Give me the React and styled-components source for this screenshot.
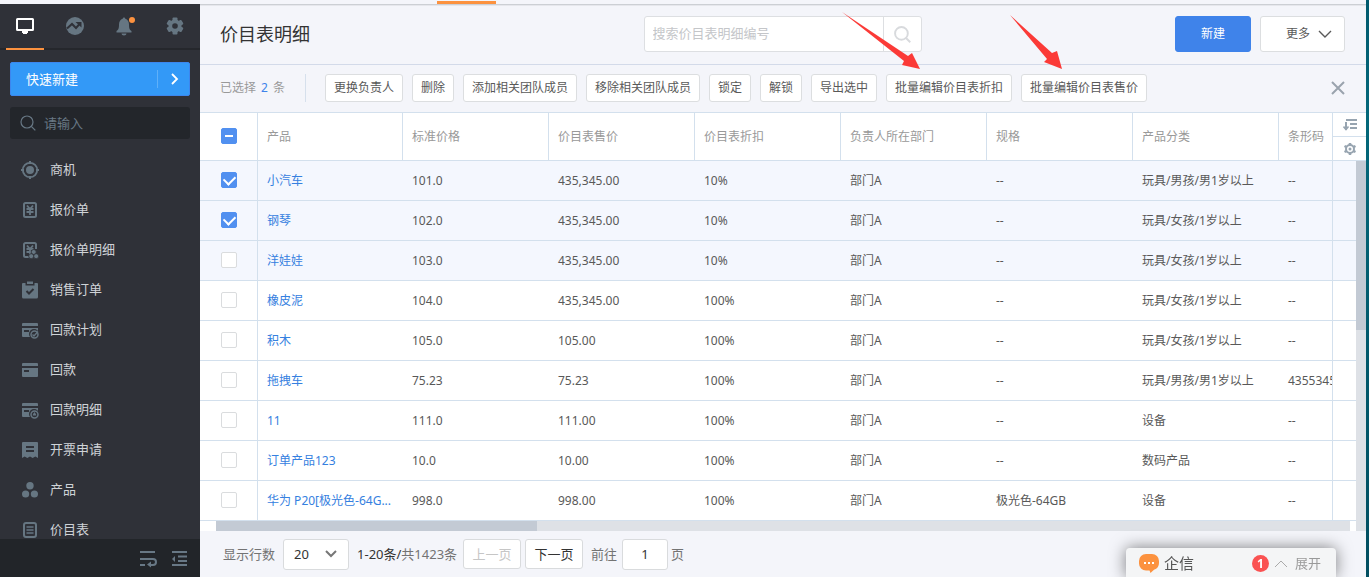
import React, { useEffect, useRef, useState } from "react";
import styled, { createGlobalStyle } from "styled-components";

const GlobalStyle = createGlobalStyle`
  * {
    box-sizing: border-box;
  }

  body {
    margin: 0;
    background: #f4f5fa;
    color: #595959;
    font-family: "Noto Sans", "Noto Sans CJK SC", sans-serif;
    font-size: 12px;
    line-height: 18px;
  }

  button, input, select {
    font: inherit;
    color: inherit;
    margin: 0;
  }

  button {
    cursor: pointer;
  }

  svg {
    display: block;
    flex: none;
  }
`;

const Page = styled.div`
  display: flex;
  height: 100vh;
  overflow: hidden;
`;

const DesktopEdge = styled.div`
  width: 3px;
  background: linear-gradient(#015a6e, #04687a 20%, #02596b 60%, #024f61);
`;

const Screen = styled.div`
  flex: 1;
  min-width: 0;
  display: flex;
  flex-direction: column;
`;

const TopStrip = styled.div`
  height: 4px;
  padding: 1px 0 0 437px;
`;

const TopIndicator = styled.div`
  width: 59px;
  height: 3px;
  background: #fc923f;
`;

const Layout = styled.div`
  flex: 1;
  min-height: 0;
  display: flex;
`;

/* ---- sidebar ---- */

const Sidebar = styled.aside`
  width: 200px;
  flex: none;
  display: flex;
  flex-direction: column;
  background: #2f3138;
  color: #687885;
`;

const SideTabs = styled.div`
  display: grid;
  grid-template-columns: repeat(4, 1fr);
  height: 46px;
  border-bottom: 2px solid #25272c;
`;

const SideTab = styled.button`
  position: relative;
  display: flex;
  align-items: center;
  justify-content: center;
  padding: 0;
  border: 0;
  background: none;
  color: ${(props) => (props.$active ? "#fff" : "#667682")};

  &::after {
    content: "";
    display: ${(props) => (props.$active ? "block" : "none")};
    position: absolute;
    left: 6px;
    right: 6px;
    bottom: -2px;
    height: 2px;
    background: #fc923f;
  }
`;

const QuickCreate = styled.button`
  display: flex;
  align-items: center;
  height: 34px;
  margin: 12px 10px 11px;
  padding: 0 10px 0 15px;
  border: 1px solid #3c86ee;
  border-radius: 2px;
  background: #3399f7;
  color: #fff;
  font-size: 13px;

  span {
    flex: 1;
    text-align: left;
  }

  svg {
    margin-left: 11px;
  }
`;

const QuickDivider = styled.i`
  width: 1px;
  height: 18px;
  background: #5fb0f9;
`;

const SideSearch = styled.label`
  display: flex;
  align-items: center;
  gap: 8px;
  height: 32px;
  margin: 0 10px;
  padding: 0 10px;
  border-radius: 3px;
  background: #23262b;

  input {
    flex: 1;
    min-width: 0;
    padding: 0;
    border: 0;
    outline: 0;
    background: none;
    font-size: 13px;
    color: #c6cbd0;
  }

  input::placeholder {
    color: #687885;
    opacity: 1;
  }
`;

const SideNav = styled.nav`
  flex: 1;
  min-height: 0;
  overflow: hidden;
  padding-top: 11px;
`;

const SideLink = styled.a`
  display: flex;
  align-items: center;
  gap: 10px;
  height: 40px;
  padding-left: 20px;
  color: #cfd3d7;
  font-size: 13px;
  text-decoration: none;

  svg {
    color: #667682;
  }

  span {
    padding-bottom: 2px;
  }
`;

const SideFooter = styled.div`
  display: flex;
  align-items: center;
  justify-content: flex-end;
  gap: 12px;
  height: 38px;
  padding: 2px 10px 0;
  background: #222529;
`;

const IconButton = styled.button`
  display: flex;
  align-items: center;
  justify-content: center;
  padding: 0;
  border: 0;
  background: none;
  color: inherit;
`;

/* ---- main ---- */

const Main = styled.main`
  flex: 1;
  min-width: 0;
  display: flex;
  flex-direction: column;
  box-shadow: inset 0 1px 0 #cccfd4, inset 0 2px 0 #e6e7ec;
`;

const Header = styled.header`
  display: grid;
  grid-template-columns: 1fr 278px 1fr;
  align-items: center;
  height: 61px;
  padding: 0 21px 0 20px;
  border-bottom: 1px solid #d3dae9;
`;

const Title = styled.h1`
  margin: 0;
  color: #333;
  font-size: 18px;
  font-weight: 400;
  line-height: 24px;
`;

const SearchBox = styled.form`
  display: flex;
  height: 36px;
  border: 1px solid #dddfe2;
  border-radius: 3px;
  background: #fff;

  input {
    flex: 1;
    min-width: 0;
    padding: 0 8px 2px;
    border: 0;
    outline: 0;
    background: none;
    font-size: 13px;
  }

  input::placeholder {
    color: #c4c6c9;
    opacity: 1;
  }

  button {
    width: 38px;
    border-left: 1px solid #dddfe2;
    color: #d8dadd;
  }
`;

const HeaderActions = styled.div`
  display: flex;
  justify-content: flex-end;
  gap: 9px;
`;

const Button = styled.button`
  display: flex;
  align-items: center;
  justify-content: center;
  gap: 8px;
  height: 36px;
  padding: 0 25px;
  border: 1px solid ${(props) => (props.$primary ? "#3f83ea" : "#dcdee0")};
  border-radius: 3px;
  background: ${(props) => (props.$primary ? "#3f83ea" : "#fff")};
  color: ${(props) => (props.$primary ? "#fff" : "#595959")};
`;

const MoreButton = styled(Button)`
  padding: 0 12px 0 25px;
`;

const BatchBar = styled.div`
  display: flex;
  align-items: center;
  gap: 9px;
  height: 47px;
  padding: 0 20px 2px;
  color: #999;
`;

const SelectedCount = styled.div`
  display: flex;
  align-items: center;
  gap: 5px;
  height: 28px;
  margin-right: 10px;
  padding-right: 20px;
  border-right: 1px solid #d6e0ec;
  white-space: nowrap;

  b {
    color: #3f83ea;
    font-weight: 400;
  }
`;

const BatchButton = styled.button`
  height: 28px;
  padding: 0 8px;
  border: 1px solid #dcdee0;
  border-radius: 3px;
  background: #fff;
  color: #595959;
  white-space: nowrap;
`;

const CloseButton = styled(IconButton)`
  margin-left: auto;
  color: #9aa3ad;
`;

/* ---- table ---- */

const line = "#d3e0ed";

const TableArea = styled.section`
  display: flex;
  border-top: 1px solid ${line};
  background: #fff;
`;

const TableClip = styled.div`
  flex: 1;
  min-width: 0;
  overflow: hidden;
`;

const Table = styled.table`
  width: 1225px;
  table-layout: fixed;
  border-collapse: separate;
  border-spacing: 0;
`;

const HeadCell = styled.th`
  height: 48px;
  padding: 0 9px;
  border-right: 1px solid ${line};
  border-bottom: 1px solid ${line};
  color: #999;
  font-weight: 400;
  text-align: left;
  white-space: nowrap;
`;

const Row = styled.tr`
  background: ${(props) => (props.$tinted ? "#f4f7fe" : "#fff")};
`;

const Cell = styled.td`
  height: 40px;
  padding: 0 9px;
  border-bottom: 1px solid ${line};
  overflow: hidden;
  white-space: nowrap;

  a {
    color: #3580e0;
    text-decoration: none;
  }
`;

const CheckCell = styled(Cell)`
  padding: 0 20px 1px 21px;
  border-right: 1px solid ${line};
`;

const CheckHead = styled(HeadCell)`
  padding: 0 20px 1px 21px;
`;

const Checkbox = styled.input`
  appearance: none;
  display: flex;
  align-items: center;
  justify-content: center;
  width: 16px;
  height: 16px;
  margin: 0;
  border: 1px solid #dadcde;
  border-radius: 2px;
  background: #fff;

  &:checked,
  &:indeterminate {
    border-color: #5190f0;
    background: #5190f0;
  }

  &:checked::after {
    content: "";
    width: 9px;
    height: 6px;
    margin-bottom: 2px;
    border-left: 2px solid #fff;
    border-bottom: 2px solid #fff;
    transform: rotate(-45deg);
  }

  &:indeterminate::after {
    content: "";
    width: 8px;
    height: 2px;
    background: #fff;
  }
`;

const Rail = styled.div`
  width: 34px;
  flex: none;
  display: flex;
  flex-direction: column;
  border-left: 1px solid ${line};
`;

const RailHead = styled.div`
  display: grid;
  grid-template-rows: 24px 24px;
  color: #97a4b0;

  button {
    border-bottom: 1px solid ${line};
  }
`;

const RailBody = styled.div`
  flex: 1;
  display: flex;
`;

const RailRows = styled.div`
  flex: 1;
`;

const RailRow = styled.div`
  height: 40px;
  border-bottom: 1px solid ${line};
  background: ${(props) => (props.$tinted ? "#f4f7fe" : "#fff")};
`;

const VScroll = styled.div`
  width: 10px;
  background: #dee1e6;
`;

const VThumb = styled.div`
  width: 10px;
  height: 47%;
  background: #c3cad4;
`;

const HScrollRow = styled.div`
  display: flex;
  height: 10px;
  padding-left: 16px;
  background: #fff;
`;

const HScroll = styled.div`
  flex: 1;
  margin-right: 6px;
  background: #dee1e6;
`;

const HThumb = styled.div`
  width: 321px;
  height: 10px;
  background: #c3cad4;
`;

/* ---- pager ---- */

const Pager = styled.footer`
  display: flex;
  align-items: center;
  height: 46px;
  padding-left: 23px;
  color: #737373;
  font-size: 13px;
`;

const PageSize = styled.span`
  position: relative;
  margin: 0 8px;

  select {
    appearance: none;
    display: block;
    width: 66px;
    height: 31px;
    padding: 0 10px;
    border: 1px solid #d9dbdd;
    border-radius: 3px;
    background: #fff;
    color: #333;
  }

  svg {
    position: absolute;
    right: 12px;
    top: 10px;
    pointer-events: none;
  }
`;

const Total = styled.span`
  width: 98px;
  margin-right: 8px;
  white-space: nowrap;

  b {
    color: #333;
    font-weight: 400;
  }
`;

const PageButton = styled.button`
  width: 58px;
  height: 30px;
  margin-right: 4px;
  padding: 0;
  border: 1px solid #d9dbdd;
  border-radius: 3px;
  background: #fff;
  color: #333;

  &:disabled {
    color: #c6c6c6;
  }
`;

const PageInput = styled.input`
  width: 46px;
  height: 31px;
  margin: 0 3px 0 5px;
  padding: 0;
  border: 1px solid #d9dbdd;
  border-radius: 3px;
  background: #fff;
  color: #333;
  text-align: center;
`;

const PageLabel = styled.label`
  margin-left: ${(props) => (props.$gap ? "4px" : "0")};
`;

/* ---- floating chat + arrows ---- */

const ChatBar = styled.button`
  position: fixed;
  right: 33px;
  bottom: 0;
  display: flex;
  align-items: center;
  width: 210px;
  height: 29px;
  padding: 1px 15px 0 13px;
  border: 0;
  border-radius: 4px 4px 0 0;
  background: #f4f5f6;
  box-shadow: 0 0 16px rgba(0, 0, 0, 0.5);
  color: #999;
  font-size: 13px;

  strong {
    flex: 1;
    margin-left: 5px;
    color: #555;
    font-size: 15px;
    font-weight: 400;
    text-align: left;
  }
`;

const Badge = styled.em`
  width: 17px;
  height: 17px;
  margin-right: 5px;
  border-radius: 50%;
  background: #fa5252;
  color: #fff;
  font-size: 12px;
  font-style: normal;
  font-weight: 700;
  line-height: 17px;
  text-align: center;
`;

const ChatToggle = styled.span`
  margin-left: 7px;
`;

const Arrows = styled.svg`
  position: absolute;
  left: 842px;
  top: 12px;
  pointer-events: none;
`;

const MonitorIcon = () => (
  <svg width="18" height="18" viewBox="0 0 18 18">
    <path
      fill="currentColor"
      fillRule="evenodd"
      d="M1.500 1h15A1.500 1.500 0 0 1 18 2.500v10a1.500 1.500 0 0 1-1.500 1.500H12v2h-1v1H7v-1H6v-2H1.500A1.500 1.500 0 0 1 0 12.500v-10A1.500 1.500 0 0 1 1.500 1zM2 3v9h14V3z"
    />
  </svg>
);

const TrendIcon = () => (
  <svg width="18" height="18" viewBox="0 0 18 18">
    <circle cx="9" cy="9" r="9" fill="currentColor" />
    <path d="M1 11.500l5-4.500 4 4 4-4.500" fill="none" stroke="#2f3138" strokeWidth="2" />
    <path d="M9.500 5h6v5.500z" fill="#2f3138" />
  </svg>
);

const BellIcon = () => (
  <svg width="20" height="20" viewBox="0 0 20 20">
    <path fill="currentColor" d="M9 1.500a1.300 1.300 0 0 1 1.300 1.300C12.800 3.500 14 6 14 8.500c0 4 .6 5.200 2.500 6.500v1.500h-15V15C3.400 13.700 4 12.500 4 8.500 4 6 5.200 3.500 7.700 2.800A1.300 1.300 0 0 1 9 1.500z" />
    <path fill="currentColor" d="M6.500 17.500h5a2.500 2 0 0 1-5 0z" />
    <circle cx="17" cy="4" r="3" fill="#fc923f" />
  </svg>
);

const GearIcon = () => (
  <svg width="18" height="18" viewBox="0 0 18 18">
    <g fill="currentColor">
      {[0, 60, 120].map((deg) => (
        <rect key={deg} x="6.500" y="0.500" width="5" height="17" rx="1" transform={`rotate(${deg} 9 9)`} />
      ))}
      <circle cx="9" cy="9" r="6.500" />
    </g>
    <circle cx="9" cy="9" r="2.800" fill="#2f3138" />
  </svg>
);

const SmallGearIcon = () => (
  <svg width="14" height="14" viewBox="0 0 14 14" fill="none" stroke="currentColor">
    <path d="M7 1v2M7 11v2M1.500 4l2 1M10.500 9l2 1M1.500 10l2-1M10.500 5l2-1" strokeWidth="2.500" />
    <circle cx="7" cy="7" r="4" strokeWidth="2" />
    <circle cx="7" cy="7" r="1.500" fill="currentColor" stroke="none" />
  </svg>
);

const Chevron = ({ d, width, height, stroke = 1.5, color = "currentColor" }) => (
  <svg width={width} height={height} viewBox={`0 0 ${width} ${height}`}>
    <path d={d} fill="none" stroke={color} strokeWidth={stroke} />
  </svg>
);

const SearchIcon = ({ size, stroke }) => (
  <svg width={size} height={size} viewBox="0 0 16 16" fill="none" stroke="currentColor" strokeWidth={stroke}>
    <circle cx="7" cy="7" r="6" />
    <path d="M11.300 11.300l4 4" />
  </svg>
);

const Yuan = () => (
  <path d="M7 5.500l3 3.500 3-3.500M6.500 9h7M6.500 12h7M10 8.500V15" fill="none" stroke="currentColor" strokeWidth="1.800" />
);

const CardBase = ({ cut }) => (
  <>
    <path fill="currentColor" d="M3 3h14a1 1 0 0 1 1 1v2H2V4a1 1 0 0 1 1-1z" />
    <path fill="currentColor" d="M2 8h16v8a1 1 0 0 1-1 1H3a1 1 0 0 1-1-1z" />
    <path fill="#2f3138" d="M4 10h5v2H4z" />
    {cut && <circle cx="14" cy="14" r="5" fill="#2f3138" />}
    {cut && <circle cx="14.500" cy="14.500" r="3.500" fill="none" stroke="currentColor" strokeWidth="1.500" />}
  </>
);

const navIcons = {
  target: (
    <>
      <circle cx="10" cy="10" r="7.200" fill="none" stroke="currentColor" strokeWidth="1.800" />
      <circle cx="10" cy="10" r="4" fill="currentColor" />
      <path d="M10 1v3M10 16v3M1 10h3M16 10h3" stroke="currentColor" strokeWidth="2" />
    </>
  ),
  quote: (
    <>
      <rect x="4" y="3" width="12" height="14" rx="1.500" fill="none" stroke="currentColor" strokeWidth="2" />
      <Yuan />
    </>
  ),
  quoteDetail: (
    <>
      <path d="M9 17H5.500A1.500 1.500 0 0 1 4 15.500v-11A1.500 1.500 0 0 1 5.500 3h9A1.500 1.500 0 0 1 16 4.500V9" fill="none" stroke="currentColor" strokeWidth="2" />
      <Yuan />
      <g fill="currentColor" stroke="#2f3138" strokeWidth="0.800">
        <circle cx="13.700" cy="12" r="2.500" />
        <circle cx="11.200" cy="16.200" r="2.500" />
        <circle cx="16.200" cy="16.200" r="2.500" />
      </g>
    </>
  ),
  order: (
    <>
      <path fill="currentColor" d="M3 3h2.500v2.500h9V3H17a1 1 0 0 1 1 1v13a1.500 1.500 0 0 1-1.500 1.500h-13A1.500 1.500 0 0 1 2 17V4a1 1 0 0 1 1-1z" />
      <path fill="currentColor" d="M7 1.500h6V4H7z" />
      <path d="M6.500 11l2.500 2.500L13.500 9" fill="none" stroke="#2f3138" strokeWidth="2" />
    </>
  ),
  plan: (
    <>
      <CardBase cut />
      <path d="M12.500 14.500l1.500 1.500 4-4.500" fill="none" stroke="currentColor" strokeWidth="1.400" />
    </>
  ),
  card: <CardBase />,
  cardDetail: (
    <>
      <CardBase cut />
      <path d="M14.500 12c1 1.300 1.700 2 1.700 3.500h-3.400c0-1.500.7-2.200 1.700-3.500z" fill="currentColor" />
    </>
  ),
  invoice: (
    <>
      <path fill="currentColor" d="M3 2h14a1 1 0 0 1 1 1v15l-2.700-1.500L12.700 18 10 16.500 7.300 18l-2.600-1.500L2 18V3a1 1 0 0 1 1-1z" />
      <path d="M6 7h8M6 11h8" stroke="#2f3138" strokeWidth="2" />
    </>
  ),
  product: (
    <g fill="currentColor">
      <circle cx="10" cy="5.800" r="3.700" />
      <circle cx="5.600" cy="14" r="3.600" />
      <circle cx="14.400" cy="14" r="3.600" />
    </g>
  ),
  priceList: (
    <>
      <rect x="4" y="3" width="12" height="14" rx="2" fill="none" stroke="currentColor" strokeWidth="2" />
      <path d="M6.500 7h7M6.500 10h7M6.500 13h7" stroke="currentColor" strokeWidth="1.700" />
    </>
  ),
};

const NavIcon = ({ name }) => (
  <svg width="20" height="20" viewBox="0 0 20 20">
    {navIcons[name]}
  </svg>
);

const navItems = [
  ["target", "商机"],
  ["quote", "报价单"],
  ["quoteDetail", "报价单明细"],
  ["order", "销售订单"],
  ["plan", "回款计划"],
  ["card", "回款"],
  ["cardDetail", "回款明细"],
  ["invoice", "开票申请"],
  ["product", "产品"],
  ["priceList", "价目表"],
];

const batchActions = [
  "更换负责人",
  "删除",
  "添加相关团队成员",
  "移除相关团队成员",
  "锁定",
  "解锁",
  "导出选中",
  "批量编辑价目表折扣",
  "批量编辑价目表售价",
];

const columns = ["产品", "标准价格", "价目表售价", "价目表折扣", "负责人所在部门", "规格", "产品分类", "条形码"];

const rows = [
  ["小汽车", "101.0", "435,345.00", "10%", "部门A", "--", "玩具/男孩/男1岁以上", "--"],
  ["钢琴", "102.0", "435,345.00", "10%", "部门A", "--", "玩具/女孩/1岁以上", "--"],
  ["洋娃娃", "103.0", "435,345.00", "10%", "部门A", "--", "玩具/女孩/1岁以上", "--"],
  ["橡皮泥", "104.0", "435,345.00", "100%", "部门A", "--", "玩具/女孩/1岁以上", "--"],
  ["积木", "105.0", "105.00", "100%", "部门A", "--", "玩具/女孩/1岁以上", "--"],
  ["拖拽车", "75.23", "75.23", "100%", "部门A", "--", "玩具/男孩/男1岁以上", "4355345"],
  ["11", "111.0", "111.00", "100%", "部门A", "--", "设备", "--"],
  ["订单产品123", "10.0", "10.00", "100%", "部门A", "--", "数码产品", "--"],
  ["华为 P20[极光色-64G...", "998.0", "998.00", "100%", "部门A", "极光色-64GB", "设备", "--"],
];

function App() {
  const [selected, setSelected] = useState([0, 1]);
  const [hovered, setHovered] = useState(2);
  const [page, setPage] = useState("1");
  const allRef = useRef(null);

  const isTinted = (index) => selected.includes(index) || hovered === index;

  useEffect(() => {
    allRef.current.indeterminate = selected.length > 0 && selected.length < rows.length;
  }, [selected]);

  const toggleRow = (index) => {
    setSelected(selected.includes(index) ? selected.filter((i) => i !== index) : [...selected, index]);
  };

  const toggleAll = () => {
    setSelected(selected.length === rows.length ? [] : rows.map((_, i) => i));
  };

  return (
    <Page>
      <GlobalStyle />
      <Screen>
        <TopStrip>
          <TopIndicator />
        </TopStrip>
        <Layout>
          <Sidebar>
            <SideTabs>
              <SideTab $active aria-label="工作台"><MonitorIcon /></SideTab>
              <SideTab aria-label="报表"><TrendIcon /></SideTab>
              <SideTab aria-label="提醒"><BellIcon /></SideTab>
              <SideTab aria-label="设置"><GearIcon /></SideTab>
            </SideTabs>
            <QuickCreate>
              <span>快速新建</span>
              <QuickDivider />
              <Chevron width={10} height={12} d="M3 1l5 5-5 5" stroke={1.8} />
            </QuickCreate>
            <SideSearch>
              <SearchIcon size={16} stroke={1.2} />
              <input type="text" placeholder="请输入" aria-label="请输入" />
            </SideSearch>
            <SideNav>
              {navItems.map(([icon, label]) => (
                <SideLink key={label} href="#">
                  <NavIcon name={icon} />
                  <span>{label}</span>
                </SideLink>
              ))}
            </SideNav>
            <SideFooter>
              <IconButton aria-label="换行">
                <svg width="20" height="18" viewBox="0 0 20 18" fill="none" stroke="currentColor" strokeWidth="2">
                  <path d="M2 2h15M2 9h13a2.500 2.500 0 0 1 0 6h-3M2 15h5" />
                  <path d="M13 11.500v6l-4-3z" fill="currentColor" stroke="none" />
                </svg>
              </IconButton>
              <IconButton aria-label="收起">
                <svg width="20" height="18" viewBox="0 0 20 18" fill="none" stroke="currentColor" strokeWidth="2">
                  <path d="M2 2h15M8 6.500h9M8 11h9M2 15h15" />
                  <path d="M5 6v6L2 9z" fill="currentColor" stroke="none" />
                </svg>
              </IconButton>
            </SideFooter>
          </Sidebar>

          <Main>
            <Header>
              <Title>价目表明细</Title>
              <SearchBox onSubmit={(e) => e.preventDefault()}>
                <input type="text" placeholder="搜索价目表明细编号" aria-label="搜索价目表明细编号" />
                <IconButton type="submit" aria-label="搜索">
                  <SearchIcon size={17} stroke={1.8} />
                </IconButton>
              </SearchBox>
              <HeaderActions>
                <Button $primary>新建</Button>
                <MoreButton>
                  更多
                  <Chevron width={14} height={10} d="M1 2l6 6 6-6" stroke={1.4} />
                </MoreButton>
              </HeaderActions>
            </Header>

            <BatchBar>
              <SelectedCount>
                已选择<b>{selected.length}</b>条
              </SelectedCount>
              {batchActions.map((action) => (
                <BatchButton key={action}>{action}</BatchButton>
              ))}
              <CloseButton aria-label="关闭">
                <Chevron width={16} height={16} d="M2 2l12 12M14 2L2 14" stroke={2} />
              </CloseButton>
            </BatchBar>

            <TableArea>
              <TableClip>
                <Table>
                  <colgroup>
                    <col style={{ width: 58 }} />
                    <col style={{ width: 145 }} />
                    {columns.slice(1).map((name) => (
                      <col key={name} style={{ width: 146 }} />
                    ))}
                  </colgroup>
                  <thead>
                    <tr>
                      <CheckHead>
                        <Checkbox ref={allRef} type="checkbox" aria-label="全选" checked={selected.length === rows.length} onChange={toggleAll} />
                      </CheckHead>
                      {columns.map((name) => (
                        <HeadCell key={name}>{name}</HeadCell>
                      ))}
                    </tr>
                  </thead>
                  <tbody>
                    {rows.map((row, index) => (
                      <Row key={row[0]} $tinted={isTinted(index)} onMouseEnter={() => setHovered(index)}>
                        <CheckCell>
                          <Checkbox type="checkbox" aria-label={row[0]} checked={selected.includes(index)} onChange={() => toggleRow(index)} />
                        </CheckCell>
                        {row.map((value, i) => (
                          <Cell key={columns[i]}>{i === 0 ? <a href="#">{value}</a> : value}</Cell>
                        ))}
                      </Row>
                    ))}
                  </tbody>
                </Table>
              </TableClip>
              <Rail>
                <RailHead>
                  <IconButton aria-label="排序">
                    <svg width="14" height="12" viewBox="0 0 14 12" fill="none" stroke="currentColor" strokeWidth="2">
                      <path d="M3 1h11M7 5h7M7 9h7M3 3v8" />
                      <path d="M0.500 7.500L3 10.500 5.500 7.500" strokeWidth="1.600" />
                    </svg>
                  </IconButton>
                  <IconButton aria-label="列设置"><SmallGearIcon /></IconButton>
                </RailHead>
                <RailBody>
                  <RailRows>
                    {rows.map((row, index) => (
                      <RailRow key={row[0]} $tinted={isTinted(index)} />
                    ))}
                  </RailRows>
                  <VScroll>
                    <VThumb />
                  </VScroll>
                </RailBody>
              </Rail>
            </TableArea>
            <HScrollRow>
              <HScroll>
                <HThumb />
              </HScroll>
              <VScroll />
            </HScrollRow>

            <Pager>
              <label htmlFor="page-size">显示行数</label>
              <PageSize>
                <select id="page-size" defaultValue="20">
                  <option>20</option>
                  <option>50</option>
                  <option>100</option>
                </select>
                <Chevron width={12} height={10} d="M1 2l5 5 5-5" stroke={2} color="#777" />
              </PageSize>
              <Total><b>1-20条/</b>共1423条</Total>
              <PageButton disabled>上一页</PageButton>
              <PageButton>下一页</PageButton>
              <PageLabel $gap htmlFor="page-no">前往</PageLabel>
              <PageInput id="page-no" type="text" value={page} onChange={(e) => setPage(e.target.value)} />
              <PageLabel htmlFor="page-no">页</PageLabel>
            </Pager>
          </Main>
        </Layout>
      </Screen>
      <DesktopEdge />

      <ChatBar>
        <svg width="20" height="19" viewBox="0 0 20 19">
          <path fill="#fc923f" d="M7 0h6a7 7 0 0 1 7 7v2a7 7 0 0 1-5 6.700L11.500 19l-1-2.500H7a7 7 0 0 1-7-7V7a7 7 0 0 1 7-7z" />
          <path fill="#fff" d="M5 8h2v2H5zM9 8h2v2H9zM13 8h2v2h-2z" />
        </svg>
        <strong>企信</strong>
        <Badge>1</Badge>
        <Chevron width={14} height={9} d="M1 8l6-6 6 6" stroke={1} color="#aaa" />
        <ChatToggle>展开</ChatToggle>
      </ChatBar>

      <Arrows width="220" height="58" viewBox="0 0 220 58" fill="#fb3a37">
        <path d="M0 0L66 44l4-3 8 16-18-4 2-4z" />
        <path d="M168 3l42 38 5-2 5 18-18-7 3-3z" />
      </Arrows>
    </Page>
  );
}

export default App;
